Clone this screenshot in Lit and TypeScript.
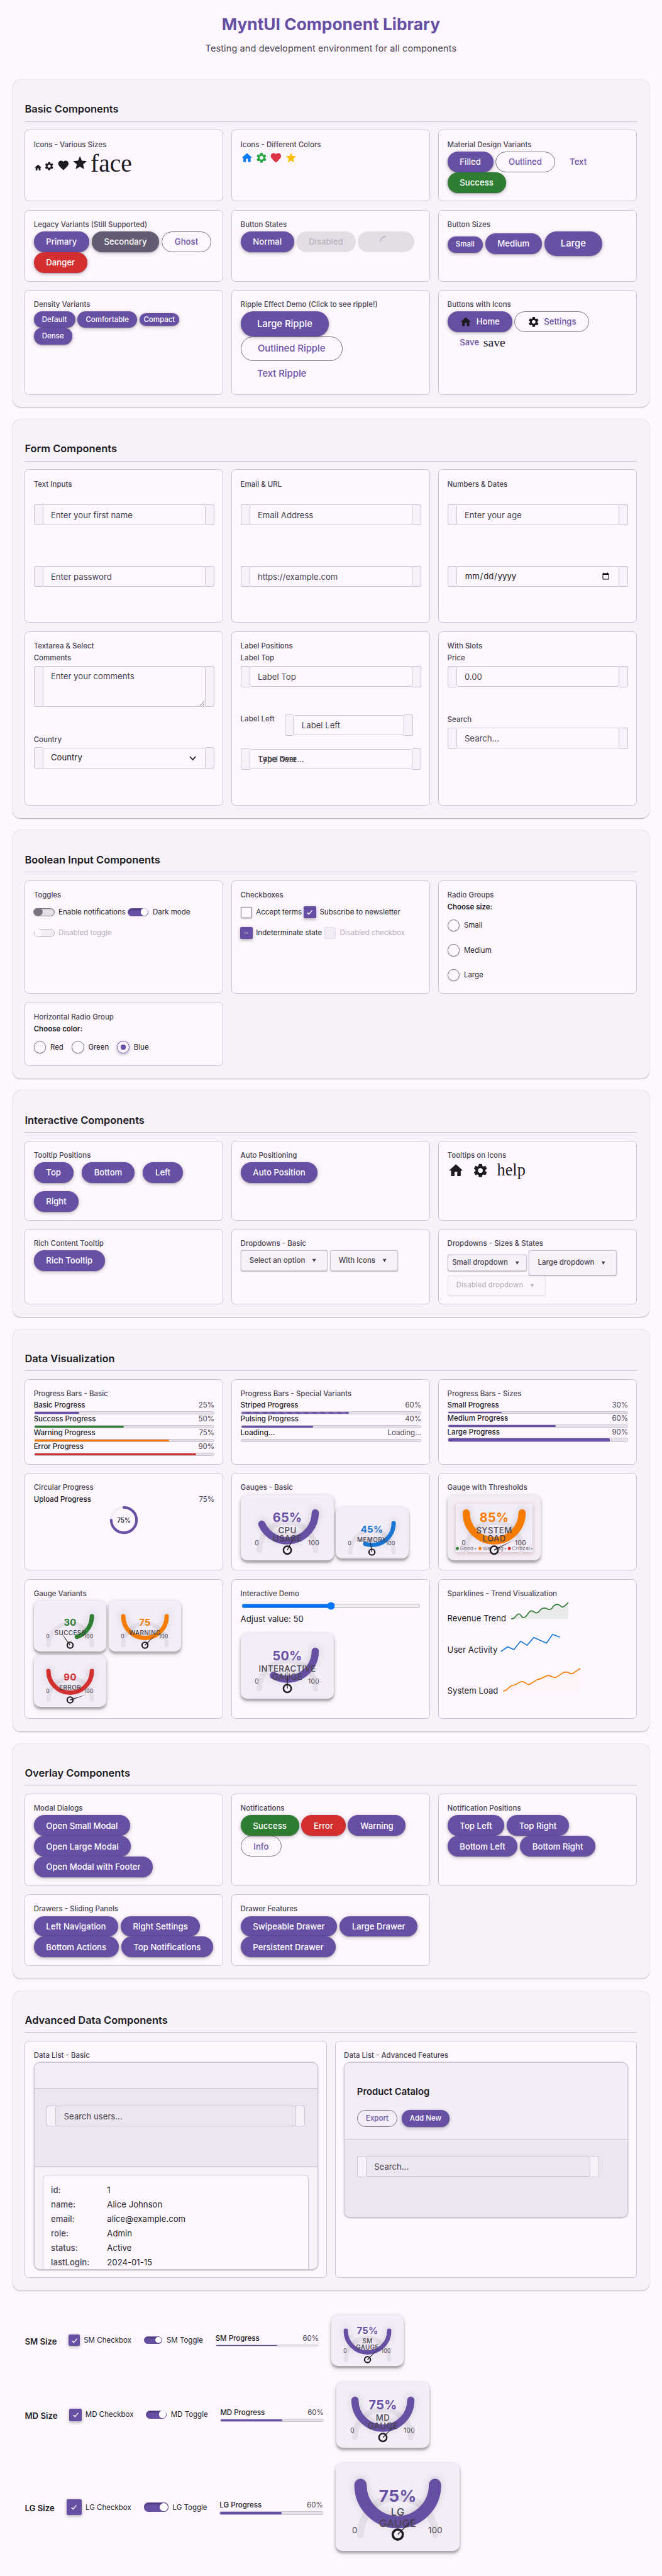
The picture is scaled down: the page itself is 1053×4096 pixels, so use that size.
import { LitElement, html, css, svg, nothing } from "lit";
import { customElement, property } from "lit/decorators.js";

const ICONS: Record<string, string> = {
  home: "M10 20v-6h4v6h5v-8h3L12 3 2 12h3v8z",
  settings:
    "M19.14 12.94c.04-.3.06-.61.06-.94 0-.32-.02-.64-.07-.94l2.03-1.58c.18-.14.23-.41.12-.61l-1.92-3.32c-.12-.22-.37-.29-.59-.22l-2.39.96c-.5-.38-1.03-.7-1.62-.94l-.36-2.54c-.04-.24-.24-.41-.48-.41h-3.84c-.24 0-.43.17-.47.41l-.36 2.54c-.59.24-1.13.57-1.62.94l-2.39-.96c-.22-.08-.47 0-.59.22L2.74 8.87c-.12.21-.08.47.12.61l2.03 1.58c-.05.3-.09.63-.09.94s.02.64.07.94l-2.03 1.58c-.18.14-.23.41-.12.61l1.92 3.32c.12.22.37.29.59.22l2.39-.96c.5.38 1.03.7 1.62.94l.36 2.54c.05.24.24.41.48.41h3.84c.24 0 .44-.17.47-.41l.36-2.54c.59-.24 1.13-.56 1.62-.94l2.39.96c.22.08.47 0 .59-.22l1.92-3.32c.12-.22.07-.47-.12-.61l-2.01-1.58zM12 15.6c-1.98 0-3.6-1.62-3.6-3.6s1.62-3.6 3.6-3.6 3.6 1.62 3.6 3.6-1.62 3.6-3.6 3.6z",
  favorite:
    "M12 21.35l-1.45-1.32C5.4 15.36 2 12.28 2 8.5 2 5.42 4.42 3 7.5 3c1.74 0 3.41.81 4.5 2.09C13.09 3.81 14.76 3 16.5 3 19.58 3 22 5.42 22 8.5c0 3.78-3.4 6.86-8.55 11.54L12 21.35z",
  star: "M12 17.27L18.18 21l-1.64-7.03L22 9.24l-7.19-.61L12 2 9.19 8.63 2 9.24l5.46 4.73L5.82 21z",
};

const icon = (name: string, size: number, color = "#1c1b1f") =>
  html`<svg class="icon" width=${size} height=${size} viewBox="0 0 24 24" fill=${color}><path d=${ICONS[name]}></path></svg>`;

const SIZES: Record<string, any> = {
  sm: { w: 140, h: 98.5, cy: 30.3, track: 8.4, bar: 8.4, hub: 5.7, hs: 2.6, val: 18, lab: 12, lh: 12, last: 66.6, gap: 17.6, mm: 10.5, mmY: 72.4, x0: 26.8, x1: 106 },
  md: { w: 180, h: 126.7, cy: 34.7, track: 10.8, bar: 14, hub: 7.5, hs: 3, val: 24, lab: 16, lh: 16, last: 90, gap: 22.3, mm: 12.5, mmY: 97.7, x0: 31.2, x1: 141 },
  lg: { w: 240, h: 169, cy: 41.5, track: 14, bar: 24, hub: 9.8, hs: 4.4, val: 32, lab: 20, lh: 21.8, last: 122.8, gap: 26.6, mm: 16, mmY: 135, x0: 37, x1: 192.7 },
};

@customElement("mu-gauge")
class MuGauge extends LitElement {
  @property() size = "md";
  @property({ type: Number }) value = 0;
  @property() unit = "";
  @property() label = "";
  @property() color = "#6750a4";
  @property({ type: Boolean }) legend = false;

  static styles = css`
    :host { display: block; flex: none; }
    .box { display: block; background: #f3edf7; border-radius: 12px; overflow: hidden;
      box-shadow: 0 4px 4px rgba(0, 0, 0, 0.24), 0 0 6px rgba(0, 0, 0, 0.12), 0 6px 10px rgba(0, 0, 0, 0.1); }
    svg { display: block; font-family: Inter, sans-serif; overflow: visible; }
    .alert { background: #f4ecf5; }
    .bar { filter: drop-shadow(0 -3px 7px rgba(0, 0, 0, 0.14)); }
    .val { font-weight: 700; letter-spacing: 0.5px; }
    .panel { filter: drop-shadow(0 2px 4px rgba(120, 50, 40, 0.3)); }
  `;

  render() {
    const s = SIZES[this.size];
    const cx = s.w / 2;
    const r = s.w * 0.3;
    const hubY = s.cy + s.w * 0.4;
    const a = (Math.min(180, this.value * 2.4) * Math.PI) / 180;
    const ex = cx + r * Math.cos(a);
    const ey = s.cy + r * Math.sin(a);
    const n = ((this.value - 50) * 1.8 * Math.PI) / 180;
    const len = s.w * 0.267;
    const lines = this.label.split("|");
    const firstY = s.last - (lines.length - 1) * s.lh;
    const tx = cx + Math.sin(n) * len;
    const ty = hubY - Math.cos(n) * len;
    const px = Math.cos(n) * 0.9;
    const py = Math.sin(n) * 0.9;
    return html`<div class="box ${this.legend ? "alert" : ""}">
      <svg width=${s.w} height=${s.h} viewBox="0 0 ${s.w} ${s.h}">
        <defs><linearGradient id="n" gradientUnits="userSpaceOnUse" x1=${cx} y1=${hubY} x2=${tx} y2=${ty}>
          <stop offset="0.5" stop-color="#1c1b1f"></stop><stop offset="1" stop-color="#1c1b1f" stop-opacity="0.15"></stop>
        </linearGradient></defs>
        ${this.legend ? svg`<rect class="panel" x="15.7" y="16.7" width="148.6" height="94" fill="#f3edf9"></rect>` : nothing}
        <path d="M${cx - r} ${hubY}A${r} ${r} 0 0 1 ${cx + r} ${hubY}" fill="none" stroke="#e4dfe8" stroke-width=${s.track} stroke-linecap="round"></path>
        <path class="bar" d="M${cx + r} ${s.cy}A${r} ${r} 0 0 1 ${ex} ${ey}" fill="none" stroke=${this.color} stroke-width=${s.bar} stroke-linecap="round"></path>
        <text class="val" x=${cx} y=${firstY - s.gap} font-size=${s.val} fill=${this.color} text-anchor="middle">${this.value}${this.unit}</text>
        ${lines.map((l, i) => svg`<text x=${cx} y=${firstY + i * s.lh} font-size=${s.lab} font-weight="500" letter-spacing="0.5" fill="#49454f" text-anchor="middle">${l}</text>`)}
        <g font-size=${s.mm} fill="#49454f" letter-spacing="0.4" text-anchor="middle">
          <text x=${s.x0} y=${s.mmY}>0</text><text x=${s.x1} y=${s.mmY}>100</text>
        </g>
        ${this.legend ? svg`<g font-size="10" fill="#79747e" letter-spacing="0.2">
          <circle cx="18.8" cy="103.6" r="3" fill="#2e7d32"></circle><text x="23.7" y="106.7">Good+</text>
          <circle cx="62.6" cy="103.6" r="3" fill="#f57c00"></circle><text x="67.5" y="106.7">Warning+</text>
          <circle cx="119.4" cy="103.6" r="3" fill="#d32f2f"></circle><text x="124.6" y="106.7">Critical+</text>
        </g>` : nothing}
        <circle cx=${cx} cy=${hubY} r=${s.hub} fill="#f3edf7" stroke="#1c1b1f" stroke-width=${s.hs}></circle>
        <path d="M${cx - px} ${hubY - py}L${tx} ${ty}L${cx + px} ${hubY + py}z" fill="url(#n)"></path>
      </svg>
    </div>`;
  }
}

const btn = (label: unknown, cls = "") => html`<button class="btn ${cls}">${label}</button>`;
const card = (title: string, body: unknown, cls = "") =>
  html`<div class="card"><h3>${title}</h3><div class=${cls}>${body}</div></div>`;
const section = (title: string, cls: string, body: unknown) =>
  html`<section><h2>${title}</h2><div class="grid ${cls}">${body}</div></section>`;

const wrap = (control: unknown) => html`<div class="wrap"><i class="pre"></i>${control}<i class="post"></i></div>`;
const field = (placeholder: string, label = "", type = "text") => html`<div class="field">
  <label class="flabel">${label}</label>
  ${wrap(html`<input type=${type} placeholder=${placeholder} />`)}
</div>`;

const toggle = (label: string, cls = "") =>
  html`<div class="choice tg ${cls}"><span class="track"><i class="knob"></i></span>${label}</div>`;
const check = (label: string, state = "", size = "") => html`<div class="choice ck ${size} ${state}">
  <span class="halo"><span class="cbox">
    ${state === "on" ? html`<svg class="mark" viewBox="0 0 16 16"><path d="M3.2 8.6l3.1 3.2L12.8 4.4" fill="none" stroke="#fff" stroke-width="1.7"></path></svg>` : nothing}
    ${state === "on mixed" ? html`<i class="dash"></i>` : nothing}
  </span></span>${label}</div>`;
const radio = (label: string, on = false) =>
  html`<div class="choice rd"><span class="dot ${on ? "sel" : ""}"></span>${label}</div>`;
const dropdown = (label: string, cls = "") =>
  html`<div class="dd ${cls}">${label}<svg class="caret" viewBox="0 0 10 10"><path d="M.6 1h8.8L5 9z" fill="currentColor"></path></svg></div>`;

const progress = (label: string, value: number | null, cls = "") => html`<div class="prog ${cls}">
  <div class="phead"><b>${label}</b><span>${value === null ? "Loading..." : value + "%"}</span></div>
  <div class="bar"><div class="fill" style="width:${value ?? 0}%"></div></div>
</div>`;

const gauge = (value: number, unit: string, label: string, size = "md", color = "#6750a4") =>
  html`<mu-gauge .value=${value} .unit=${unit} .label=${label} .size=${size} .color=${color}></mu-gauge>`;

const USER = [["id:", "1"], ["name:", "Alice Johnson"], ["email:", "alice@example.com"], ["role:", "Admin"], ["status:", "Active"], ["lastLogin:", "2024-01-15"]];

const sizeRow = (name: string, cls: string) => html`<div class="sizerow ${cls}">
  <strong>${name} Size</strong>
  ${check(`${name} Checkbox`, "on", cls)}
  ${toggle(`${name} Toggle`, `on ${cls}`)}
  ${progress(`${name} Progress`, 60, cls)}
  ${gauge(75, "%", `${name}|GAUGE`, cls)}
</div>`;

@customElement("app-root")
class AppRoot extends LitElement {
  static styles = css`
    :host { display: block; height: 4096px; overflow: hidden; background: #fef7ff; }
    * { box-sizing: border-box; }
    .page { zoom: 0.8225; width: 1280px; padding: 27.7px 24px 0; color: #1c1b1f; font: 400 16px/24px Inter, sans-serif; }
    h1, h2, h3, p { margin: 0; }
    h1 { font-size: 32px; line-height: 40px; font-weight: 700; color: #6750a4; text-align: center; }
    .sub { margin-top: 14.1px; height: 72.6px; text-align: center; color: #49454f; font-size: 17.6px; letter-spacing: 0.15px; }
    section { background: #f7f2fa; border-radius: 16px; padding: 43px 24px 24px; margin-bottom: 24px; box-shadow: 0 1px 2px rgba(0, 0, 0, 0.3); }
    h2 { height: 38px; font-size: 20px; line-height: 28px; font-weight: 600; border-bottom: 1px solid #cac4d0; margin-bottom: 15.6px; }
    .grid { display: grid; grid-template-columns: repeat(3, 384px); gap: 16px; }
    .g1 { grid-template-rows: 138.6px 138.6px 202.8px; }
    .g2 { grid-template-rows: 296.6px 337.2px; }
    .g3 { grid-template-rows: 219.4px 123.4px; }
    .g4 { grid-template-rows: 154.2px 146.4px; }
    .g5 { grid-template-rows: 165.4px 188.7px 270.6px; }
    .g6 { grid-template-rows: 178.6px 138.6px; }
    .g7 { grid-template-columns: 584px 584px; grid-template-rows: 458.6px; }
    .card { background: #fef7ff; border: 1px solid #cac4d0; border-radius: 8px; padding: 16px; min-width: 0; }
    h3 { height: 24.6px; font-size: 14px; line-height: 22px; font-weight: 500; color: #49454f; }
    .row { display: flex; flex-wrap: wrap; column-gap: 4.5px; align-items: baseline; }
    .mid { align-items: center; align-content: flex-start; }
    .wide { gap: 16px; align-items: flex-start; }
    .icon { display: block; flex: none; }
    .lig { font-family: "Liberation Serif", serif; color: #1c1b1f; font-weight: 400; }
    .l48 { font-size: 48px; line-height: 48px; }
    .l32 { font-size: 32px; line-height: 32px; }
    .l24 { font-size: 24px; line-height: 24px; letter-spacing: 0; }

    .btn { display: inline-flex; align-items: center; justify-content: center; gap: 8px; height: 40px; padding: 0 24px; border: 0; border-radius: 20px; background: #6750a4; color: #fff; font: 500 16px/20px Inter, sans-serif; white-space: nowrap;
      box-shadow: 0 1px 2px rgba(0, 0, 0, 0.3), 0 2px 6px 2px rgba(0, 0, 0, 0.15); }
    .success { background: #2e7d32; }
    .danger { background: #d32f2f; }
    .secondary { background: #625b71; }
    .outlined { background: none; color: #6750a4; border: 1px solid #79747e; box-shadow: none; }
    .text { background: none; color: #6750a4; box-shadow: none; }
    .off { background: #e3dde6; color: #bbb4bf; box-shadow: none; }
    .small { height: 32px; padding: 0 16px; font-size: 14px; border-radius: 16px; }
    .large { height: 48px; padding: 0 32px; font-size: 18px; border-radius: 24px; }
    .compact { height: 24px; padding: 0 8px; font-size: 14px; border-radius: 12px; }
    .spin { width: 109px; align-self: flex-start; }

    .field { height: 119.2px; }
    .flabel { display: block; height: 25.4px; font-size: 14px; line-height: 20px; color: #49454f; font-weight: 500; }
    .wrap { display: flex; height: 41px; align-items: center; }
    .pre, .post { width: 17px; align-self: stretch; background: #f7f2fa; border: 1px solid #cac4d0; }
    .pre { border-right: 0; border-radius: 4px 0 0 4px; }
    .post { border-left: 0; border-radius: 0 4px 4px 0; }
    input, select, textarea { flex: 1; min-width: 0; height: 39.5px; border: 1px solid #cac4d0; border-radius: 4px; background: transparent; padding: 0 15px; font: 400 16px/24px Inter, sans-serif; color: #1c1b1f; margin: 0; }
    ::placeholder { color: #49454f; opacity: 1; }
    select { appearance: none; }
    .chev { width: 16px; height: 16px; margin: 0 17px 0 -33px; flex: none; pointer-events: none; }
    textarea { height: 79.5px; padding: 7px 15px; }
    .area { height: 157.6px; }
    .area .wrap { height: 79.5px; }
    .left { display: flex; height: 66.2px; }
    .left .flabel { width: 85px; line-height: 18px; white-space: nowrap; }
    .left .wrap { width: 249px; }
    .over { position: relative; }
    .overlabel { position: absolute; left: 36px; top: 11px; font-size: 14px; line-height: 20px; color: #49454f; font-weight: 500; }

    .choice { display: flex; align-items: center; gap: 8px; height: 40px; font-size: 14px; line-height: 20px; white-space: nowrap; }
    .track { position: relative; width: 40px; height: 16px; border-radius: 8px; border: 2px solid #79747e; background: #e6e0e9; box-shadow: inset 0 1px 2px rgba(0, 0, 0, 0.25); }
    .knob { position: absolute; left: -2px; top: -1px; width: 18px; height: 14px; border-radius: 8px; background: #79747e; }
    .on .track { background: #6750a4; border-color: #6750a4; box-shadow: inset 0 2px 3px rgba(0, 0, 0, 0.3); }
    .on .knob { left: auto; right: 0; top: -1px; width: 14px; height: 14px; background: #fff; }
    .dim { color: #b4adb9; }
    .dim .track { border-color: #bbb5bf; background: #f3ecf5; box-shadow: none; }
    .dim .knob { background: #fef7ff; width: 14px; left: 0; }
    .tg.sm .track { width: 36px; height: 14px; }
    .tg.sm .knob { width: 12px; height: 12px; }
    .tg.lg .track { width: 48px; height: 18px; }
    .tg.lg .knob { width: 16px; height: 16px; }
    .halo { display: flex; flex: none; width: 22px; height: 22px; align-items: center; justify-content: center; }
    .cbox { display: flex; align-items: center; justify-content: center; flex: none; width: 22px; height: 22px; border: 2px solid #79747e; border-radius: 2px; box-shadow: 0 1px 2px rgba(0, 0, 0, 0.25); }
    .ck.on .cbox { width: 24px; height: 24px; background: #6750a4; border-color: #6750a4; box-shadow: 0 2px 6px rgba(0, 0, 0, 0.3); }
    .ck.dim .cbox { box-shadow: none; background: #f3ecf5; border-color: #e3dce8; }
    .mark { width: 16px; height: 16px; flex: none; }
    .dash { width: 9px; height: 2px; background: #fff; }
    .ck.sm .halo { width: 20px; }
    .ck.sm .cbox { width: 22px; height: 22px; }
    .ck.lg .halo { width: 28px; }
    .ck.lg .cbox { width: 30px; height: 30px; }
    .group { font-size: 14px; line-height: 20px; font-weight: 600; }
    .dot { width: 24px; height: 24px; border-radius: 50%; border: 2px solid #79747e; box-shadow: 0 1px 2px rgba(0, 0, 0, 0.25); }
    .sel { border-color: #6750a4; background: radial-gradient(circle, #6750a4 5px, transparent 5.6px); box-shadow: 0 2px 6px rgba(0, 0, 0, 0.3); }
    .rcol { display: flex; flex-direction: column; padding-top: 1.4px; }
    .rd { height: 48px; }
    .rrow { display: flex; gap: 16px; padding-top: 1px; }

    .dd { display: flex; align-items: center; height: 40px; padding: 0 20px 0 16px; border: 1px solid #cac4d0; border-radius: 4px; background: #f7f2fa; color: #49454f; font-size: 14px; font-weight: 500; box-shadow: 0 1px 2px rgba(0, 0, 0, 0.3); white-space: nowrap; }
    .caret { width: 9px; height: 8px; margin-left: 13px; }
    .ds { height: 32px; padding: 0 13px 0 8px; }
    .dl { height: 48px; }
    .ddim { opacity: 0.38; }
    .ds { margin-top: 8px; align-self: flex-start; }

    .prog { height: 26.6px; }
    .phead { display: flex; justify-content: space-between; height: 20.6px; font-size: 14px; line-height: 18px; }
    .phead b { font-weight: 500; }
    .phead span { color: #49454f; }
    .bar { height: 6px; border: 1px solid #cac4d0; border-radius: 3px; background: #e6e0e9; overflow: hidden; }
    .fill { height: 100%; background: #6750a4; border-radius: 2px; }
    .psuccess .fill { background: #2e7d32; }
    .pwarning .fill { background: #f57c00; }
    .perror .fill { background: #d32f2f; }
    .striped .fill { background-image: linear-gradient(45deg, rgba(255, 255, 255, 0.15) 25%, transparent 25%, transparent 50%, rgba(255, 255, 255, 0.15) 50%, rgba(255, 255, 255, 0.15) 75%, transparent 75%); background-size: 16px 16px; }
    .prog.sm { height: 24.6px; }
    .sm .bar { height: 4px; }
    .lg .bar { height: 8px; }
    .ring { display: block; margin: 1px auto 0; font: 600 12px Inter, sans-serif; }
    .gauges { display: flex; flex-wrap: wrap; gap: 7.9px 4.6px; }
    .drop { padding-top: 24.4px; }
    .range { display: block; width: 346px; height: 16px; margin: 2.1px 2px 0; padding: 0; border: 0; }
    .adjust { margin: 5.9px 0 15.4px; }
    .spark { display: flex; align-items: flex-start; }
    .spark svg { overflow: visible; flex: none; }
    .spark span { white-space: nowrap; }
    .s1 { height: 62px; } .s1 span { padding-top: 22.8px; width: 121.6px; } .s1 svg { margin-top: 3px; }
    .s2 { height: 78px; } .s2 span { padding-top: 22.4px; width: 102.8px; } .s2 svg { margin-top: 3px; }
    .s3 span { padding-top: 22.8px; width: 106.8px; } .s3 svg { margin-top: -10px; }

    .list { border: 1px solid #cac4d0; border-radius: 12px; background: #f7f2fa; overflow: hidden; box-shadow: 0 1px 3px rgba(0, 0, 0, 0.3); }
    .list1 { height: 400.6px; }
    .list2 { height: 300px; border-bottom-width: 2px; }
    .lhead { background: #f3edf7; border-bottom: 1px solid #cac4d0; height: 49.4px; padding: 0 24px; }
    .list2 .lhead { height: 147.4px; padding-top: 45px; }
    .lhead h4 { margin: 0; font-size: 18px; line-height: 24px; font-weight: 600; }
    .acts { display: flex; gap: 8px; margin-top: 22px; }
    .lfind { background: #ece6f0; border-bottom: 1px solid #cac4d0; height: 151px; padding: 32.4px 24px 0; }
    .list2 .lfind { border: 0; height: 152px; }
    .list2 .wrap { width: 468px; }
    .litem { margin: 16px 16px 0; border: 1px solid #cac4d0; border-radius: 8px; background: #fef7ff; padding: 16px 15px; height: 220px; }
    .kv { display: grid; grid-template-columns: 108.5px 1fr; height: 28px; }
    .kv span:first-child { color: #49454f; font-weight: 500; }

    .sizerow { display: flex; align-items: center; gap: 24px; padding-left: 24px; }
    .sizerow strong { font-weight: 600; padding-top: 6px; }
    .sizerow .prog { width: 200px; }
    .sizerow.sm { margin-top: 47px; height: 98.5px; }
    .sizerow.md { margin-top: 31.6px; height: 126.7px; }
    .sizerow.lg { margin-top: 31px; height: 169px; }
  `;

  render() {
    return html`<div class="page">
      <h1>MyntUI Component Library</h1>
      <p class="sub">Testing and development environment for all components</p>

      ${section("Basic Components", "g1", html`
        ${card("Icons - Various Sizes", html`${icon("home", 16)}${icon("settings", 20)}${icon("favorite", 24)}${icon("star", 32)}<span class="lig l48">face</span>`, "row")}
        ${card("Icons - Different Colors", html`${icon("home", 24, "#007bff")}${icon("settings", 24, "#28a745")}${icon("favorite", 24, "#dc3545")}${icon("star", 24, "#ffc107")}`, "row")}
        ${card("Material Design Variants", html`${btn("Filled")}${btn("Outlined", "outlined")}${btn("Text", "text")}${btn("Success", "success")}`, "row")}
        ${card("Legacy Variants (Still Supported)", html`${btn("Primary")}${btn("Secondary", "secondary")}${btn("Ghost", "outlined")}${btn("Danger", "danger")}`, "row")}
        ${card("Button States", html`${btn("Normal")}${btn("Disabled", "off")}${btn(html`<svg width="24" height="24" viewBox="0 0 24 24"><path d="M1 12A11 11 0 0 1 12 1" fill="none" stroke="#bbb4bf" stroke-width="2"></path></svg>`, "off spin")}`, "row")}
        ${card("Button Sizes", html`${btn("Small", "small")}${btn("Medium")}${btn("Large", "large")}`, "row")}
        ${card("Density Variants", html`${btn("Default", "small")}${btn("Comfortable", "small")}${btn("Compact", "compact")}${btn("Dense", "small")}`, "row")}
        ${card("Ripple Effect Demo (Click to see ripple!)", html`${btn("Large Ripple", "large")}${btn("Outlined Ripple", "large outlined")}${btn("Text Ripple", "large text")}`, "row")}
        ${card("Buttons with Icons", html`${btn(html`${icon("home", 24)}Home`)}${btn(html`${icon("settings", 24)}Settings`, "outlined")}${btn(html`Save<span class="lig l24">save</span>`, "text")}`, "row")}
      `)}

      ${section("Form Components", "g2", html`
        ${card("Text Inputs", html`${field("Enter your first name")}${field("Enter password", "", "password")}`)}
        ${card("Email & URL", html`${field("Email Address")}${field("https://example.com")}`)}
        ${card("Numbers & Dates", html`${field("Enter your age")}${field("", "", "date")}`)}
        ${card("Textarea & Select", html`
          <div class="area"><label class="flabel">Comments</label>${wrap(html`<textarea placeholder="Enter your comments"></textarea>`)}</div>
          <div class="field"><label class="flabel">Country</label>${wrap(html`<select><option>Country</option></select><svg class="chev" viewBox="0 0 16 16"><path d="M2.600 5L8 11L13.400 5" fill="none" stroke="#1c1b1f" stroke-width="2"></path></svg>`)}</div>`)}
        ${card("Label Positions", html`${field("Label Top", "Label Top")}
          <div class="left"><label class="flabel">Label Left</label>${wrap(html`<input placeholder="Label Left" />`)}</div>
          <div class="over">${wrap(html`<input placeholder="Type here..." />`)}<span class="overlabel">Label Over</span></div>`)}
        ${card("With Slots", html`${field("0.00", "Price")}${field("Search...", "Search")}`)}
      `)}

      ${section("Boolean Input Components", "g3", html`
        ${card("Toggles", html`${toggle("Enable notifications")}${toggle("Dark mode", "on")}${toggle("Disabled toggle", "dim")}`, "row mid")}
        ${card("Checkboxes", html`${check("Accept terms")}${check("Subscribe to newsletter", "on")}${check("Indeterminate state", "on mixed")}${check("Disabled checkbox", "dim")}`, "row mid")}
        ${card("Radio Groups", html`<div class="group">Choose size:</div><div class="rcol">${radio("Small")}${radio("Medium")}${radio("Large")}</div>`)}
        ${card("Horizontal Radio Group", html`<div class="group">Choose color:</div><div class="rrow">${radio("Red")}${radio("Green")}${radio("Blue", true)}</div>`)}
      `)}

      ${section("Interactive Components", "g4", html`
        ${card("Tooltip Positions", html`${btn("Top")}${btn("Bottom")}${btn("Left")}${btn("Right")}`, "row wide")}
        ${card("Auto Positioning", btn("Auto Position"), "row")}
        ${card("Tooltips on Icons", html`${icon("home", 32)}${icon("settings", 32)}<span class="lig l32">help</span>`, "row wide")}
        ${card("Rich Content Tooltip", btn("Rich Tooltip"), "row")}
        ${card("Dropdowns - Basic", html`${dropdown("Select an option")}${dropdown("With Icons")}`, "row mid")}
        ${card("Dropdowns - Sizes & States", html`${dropdown("Small dropdown", "ds")}${dropdown("Large dropdown", "dl")}${dropdown("Disabled dropdown", "ddim")}`, "row mid")}
      `)}

      ${section("Data Visualization", "g5", html`
        ${card("Progress Bars - Basic", html`${progress("Basic Progress", 25)}${progress("Success Progress", 50, "psuccess")}${progress("Warning Progress", 75, "pwarning")}${progress("Error Progress", 90, "perror")}`)}
        ${card("Progress Bars - Special Variants", html`${progress("Striped Progress", 60, "striped")}${progress("Pulsing Progress", 40)}${progress("Loading...", null)}`)}
        ${card("Progress Bars - Sizes", html`${progress("Small Progress", 30, "sm")}${progress("Medium Progress", 60)}${progress("Large Progress", 90, "lg")}`)}
        ${card("Circular Progress", html`<div class="phead"><b>Upload Progress</b><span>75%</span></div>
          <svg class="ring" width="56" height="56" viewBox="0 0 56 56">
            <circle cx="28" cy="28" r="24.5" fill="none" stroke="#f3edf5" stroke-width="5"></circle>
            <path d="M28 3.5A24.5 24.5 0 1 1 3.5 28" fill="none" stroke="#6750a4" stroke-width="5" stroke-linecap="round"></path>
            <text x="28" y="32.4" text-anchor="middle" fill="#1c1b1f">75%</text>
          </svg>`)}
        ${card("Gauges - Basic", html`${gauge(65, "%", "CPU|USAGE")}<div class="drop">${gauge(45, "%", "MEMORY", "sm", "#1976d2")}</div>`, "gauges")}
        ${card("Gauge with Thresholds", html`<mu-gauge .value=${85} unit="%" label="SYSTEM|LOAD" color="#f57c00" legend></mu-gauge>`, "gauges")}
        ${card("Gauge Variants", html`${gauge(30, "", "SUCCESS", "sm", "#2e7d32")}${gauge(75, "", "WARNING", "sm", "#f57c00")}${gauge(90, "", "ERROR", "sm", "#d32f2f")}`, "gauges")}
        ${card("Interactive Demo", html`<input class="range" type="range" .value=${"50"} /><div class="adjust">Adjust value: 50</div><div class="gauges">${gauge(50, "%", "INTERACTIVE|GAUGE")}</div>`)}
        ${card("Sparklines - Trend Visualization", html`
          <div class="spark s1"><span>Revenue Trend</span><svg width="113" height="34" viewBox="0 0 113 34">
            <path d="M1 33Q7 33 10 28Q16 20 20 26Q24 34 30 28L36 20Q39 16 44 18.500Q50 24 55 19Q61 10 69 12.500Q75 17 80 13Q84 5 90 5Q94 5 99 9.500Q102 12 112 1V33z" fill="#2e7d32" opacity="0.1"></path>
            <path d="M1 33Q7 33 10 28Q16 20 20 26Q24 34 30 28L36 20Q39 16 44 18.500Q50 24 55 19Q61 10 69 12.500Q75 17 80 13Q84 5 90 5Q94 5 99 9.500Q102 12 112 1" fill="none" stroke="#2e7d32" stroke-width="2"></path></svg></div>
          <div class="spark s2"><span>User Activity</span><svg width="116" height="36" viewBox="0 0 116 36">
            <path d="M1 34L14 25L26 30.500L39 14L51.500 22L64.500 7L77 12.500L89 18L101 1L115 6.500" fill="none" stroke="#1976d2" stroke-width="2"></path></svg></div>
          <div class="spark s3"><span>System Load</span><svg width="152" height="46" viewBox="0 0 152 46">
            <path d="M1 45Q6 45 12 39L17 35Q22 34 27 31.500L34 27.500Q39 25 44 28.500Q49 34 54 31L67 23Q76 21 82 17Q90 13 96 17Q103 21 109 15L118 9Q124 7 128 9Q134 14 139 9L151 1V45z" fill="#f57c00" opacity="0.02"></path>
            <path d="M1 45Q6 45 12 39L17 35Q22 34 27 31.500L34 27.500Q39 25 44 28.500Q49 34 54 31L67 23Q76 21 82 17Q90 13 96 17Q103 21 109 15L118 9Q124 7 128 9Q134 14 139 9L151 1" fill="none" stroke="#f57c00" stroke-width="2"></path></svg></div>`)}
      `)}

      ${section("Overlay Components", "g6", html`
        ${card("Modal Dialogs", html`${btn("Open Small Modal")}${btn("Open Large Modal")}${btn("Open Modal with Footer")}`, "row")}
        ${card("Notifications", html`${btn("Success", "success")}${btn("Error", "danger")}${btn("Warning")}${btn("Info", "outlined")}`, "row")}
        ${card("Notification Positions", html`${btn("Top Left")}${btn("Top Right")}${btn("Bottom Left")}${btn("Bottom Right")}`, "row")}
        ${card("Drawers - Sliding Panels", html`${btn("Left Navigation")}${btn("Right Settings")}${btn("Bottom Actions")}${btn("Top Notifications")}`, "row")}
        ${card("Drawer Features", html`${btn("Swipeable Drawer")}${btn("Large Drawer")}${btn("Persistent Drawer")}`, "row")}
      `)}

      ${section("Advanced Data Components", "g7", html`
        ${card("Data List - Basic", html`
          <div class="lhead"></div>
          <div class="lfind">${wrap(html`<input placeholder="Search users..." />`)}</div>
          <div class="litem">${USER.map(([k, v]) => html`<div class="kv"><span>${k}</span><span>${v}</span></div>`)}</div>`, "list list1")}
        ${card("Data List - Advanced Features", html`
          <div class="lhead"><h4>Product Catalog</h4><div class="acts">${btn("Export", "small outlined")}${btn("Add New", "small")}</div></div>
          <div class="lfind">${wrap(html`<input placeholder="Search..." />`)}</div>`, "list list2")}
      `)}

      ${sizeRow("SM", "sm")}${sizeRow("MD", "md")}${sizeRow("LG", "lg")}
    </div>`;
  }
}
